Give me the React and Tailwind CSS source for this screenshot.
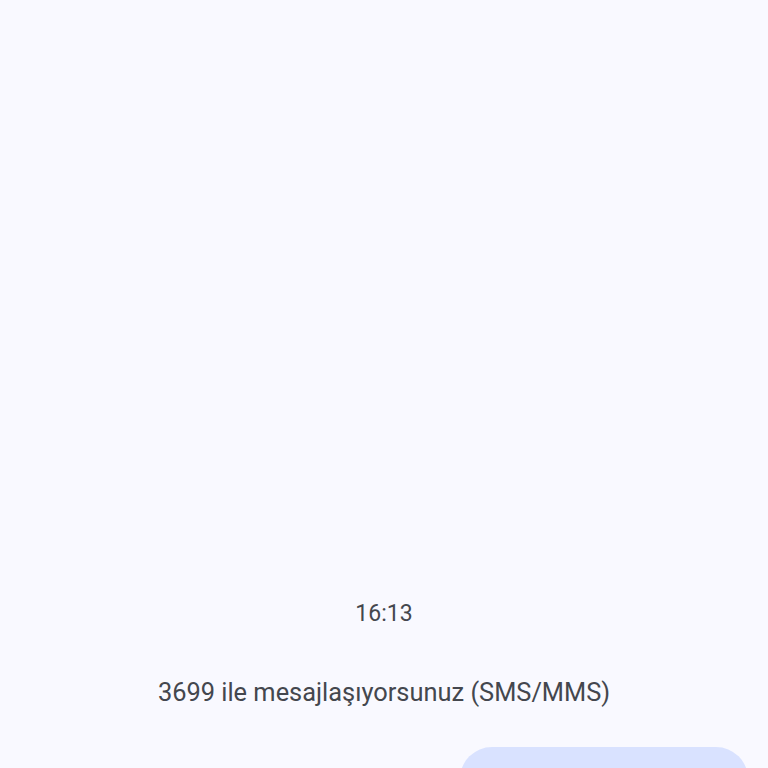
export default function App() {
  return (
    <div className="h-[768px] w-full overflow-hidden bg-[#f9f9ff] flex flex-col" style={{ fontFamily: 'Roboto, "Noto Sans", sans-serif' }}>
      <div className="flex-1" />
      <div className="text-center text-[23px] leading-[32px] text-[#44474e]">16:13</div>
      <div className="mt-[46px] text-center text-[25.4px] leading-[32px] text-[#44474e]">3699 ile mesajlaşıyorsunuz (SMS/MMS)</div>
      <div className="mt-[39px] h-[21px] shrink-0 flex justify-end pr-[20px]">
        <div className="w-[288px] h-[70px] shrink-0 rounded-[32px] bg-[#d9e2ff]" />
      </div>
    </div>
  );
}
